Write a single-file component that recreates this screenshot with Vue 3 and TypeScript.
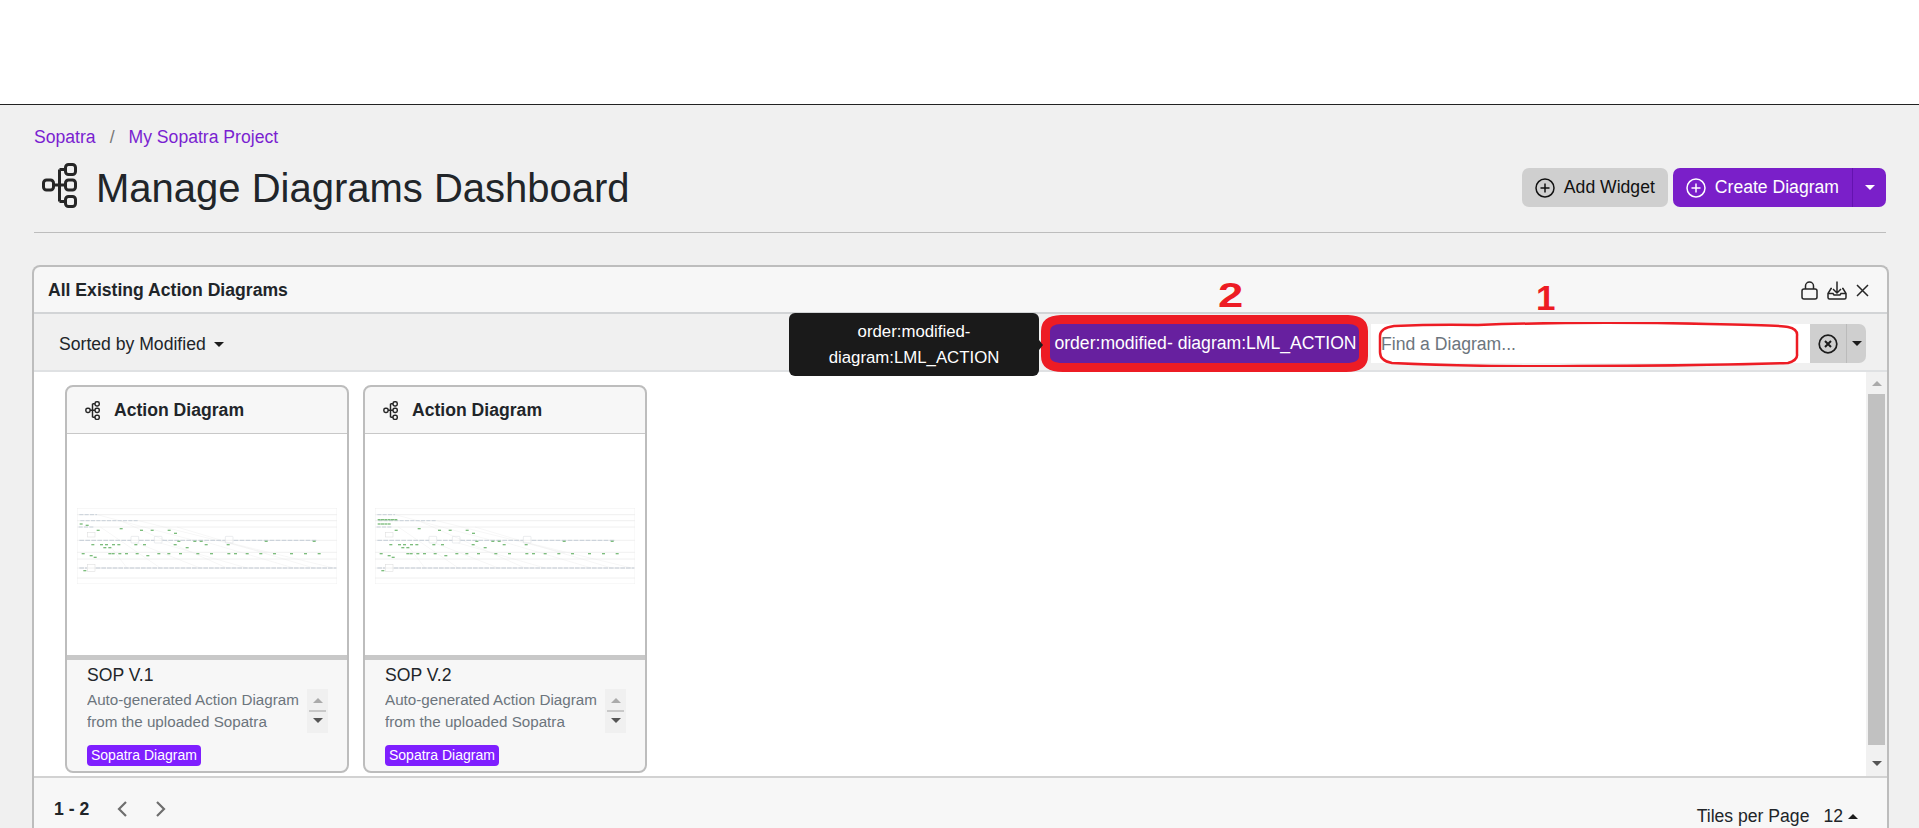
<script setup lang="ts">
const tiles = [
  { name: 'SOP V.1', variant: 1 },
  { name: 'SOP V.2', variant: 2 },
]

// thumbnail drawn in the coordinates of a 780 x 228 box (origin 50,55)
const lanes = [55, 75, 93, 112, 152, 188, 208, 235, 265, 283]
const greens1: [number, number][] = [
  [62, 103], [80, 107], [113, 122], [182, 117], [243, 122], [275, 122], [326, 122], [345, 131],
  [97, 165], [123, 165], [138, 165], [159, 165], [175, 165], [133, 174], [148, 174], [226, 165],
  [252, 165], [344, 165], [380, 174], [355, 155], [403, 155], [422, 155], [437, 165], [503, 165],
  [617, 155], [761, 155], [92, 198], [104, 203], [262, 198], [73, 243],
  [68, 192], [148, 192], [158, 192], [178, 192], [198, 192], [230, 192], [295, 192], [325, 192],
  [360, 192], [412, 192], [453, 192], [505, 192], [525, 192], [560, 192], [601, 192], [642, 192],
  [693, 192], [735, 192], [776, 192],
]
const greens2: [number, number][] = [
  [62, 90], [72, 90], [82, 90], [92, 90], [102, 90], [112, 90], [62, 103], [72, 103], [82, 103], [92, 103],
  ...greens1.slice(2),
]
const boxes = [212, 282, 495]
const faint = [
  'M110 75L400 152', 'M235 93L620 190', 'M180 93L500 235', 'M120 112L300 235', 'M230 160L420 235',
  'M300 160L560 235', 'M510 160L820 235', 'M420 152L700 235', 'M150 170L200 235', 'M350 112L760 235',
]
</script>

<template>
  <div class="page">
    <div class="top-bar"></div>
    <main class="content">
      <nav class="crumbs">
        <a>Sopatra</a>
        <span class="crumb-sep">/</span>
        <a>My Sopatra Project</a>
      </nav>

      <header class="page-head">
        <div class="title-wrap">
          <svg class="title-icon" viewBox="0 0 35 45" fill="none" stroke="#262626" stroke-width="3">
            <rect x="1.500" y="17" width="10" height="10" rx="3" />
            <rect x="23.500" y="1.500" width="10" height="10" rx="3" />
            <rect x="23.500" y="17" width="10" height="10" rx="3" />
            <rect x="23.500" y="33.500" width="10" height="10" rx="3" />
            <path d="M11.500 22h12M17.500 6.500v32M17.500 6.500h6M17.500 38.500h6" />
          </svg>
          <h1>Manage Diagrams Dashboard</h1>
        </div>
        <div class="head-actions">
          <button class="btn btn-grey">
            <svg class="btn-icon" viewBox="0 0 20 20" fill="none" stroke="currentColor" stroke-width="1.500">
              <circle cx="10" cy="10" r="9" />
              <path d="M10 5.500v9M5.500 10h9" />
            </svg>
            Add Widget
          </button>
          <div class="btn-split">
            <button class="btn btn-purple">
              <svg class="btn-icon" viewBox="0 0 20 20" fill="none" stroke="currentColor" stroke-width="1.500">
                <circle cx="10" cy="10" r="9" />
                <path d="M10 5.500v9M5.500 10h9" />
              </svg>
              Create Diagram
            </button>
            <button class="btn-caret"><span class="caret"></span></button>
          </div>
        </div>
      </header>

      <section class="panel">
        <div class="panel-head">
          <span class="panel-title">All Existing Action Diagrams</span>
          <div class="panel-tools">
            <svg class="tool-lock" viewBox="0 0 17 19" fill="none" stroke="#262626" stroke-width="1.500">
              <rect x="1" y="8" width="15" height="10" rx="2" />
              <path d="M4.500 8V5a4 4 0 0 1 8 0v3" />
            </svg>
            <svg class="tool-save" viewBox="0 0 20 19" fill="none" stroke="#262626" stroke-width="1.500">
              <path d="M10 0.500v11M6 8l4 4 4-4" />
              <path d="M5 7.500H4L1 12.500v4a1.500 1.500 0 0 0 1.500 1.500h15a1.500 1.500 0 0 0 1.500-1.500v-4L16 7.500h-1" />
              <path d="M1 12.500h5l1 1.500h6l1-1.500h5" />
            </svg>
            <svg class="tool-close" viewBox="0 0 13 13" fill="none" stroke="#262626" stroke-width="1.500">
              <path d="M1 1l11 11M12 1L1 12" />
            </svg>
          </div>
        </div>

        <div class="toolbar">
          <button class="sort-btn">Sorted by Modified <span class="caret caret-dark"></span></button>
          <div class="filter-group">
            <div class="tooltip">order:modified-<br />diagram:LML_ACTION</div>
            <div class="chip-wrap">
              <span class="chip">order:modified- diagram:LML_ACTION</span>
              <svg class="ink ink-chip" viewBox="0 0 327 57" preserveAspectRatio="none" fill="none" stroke="#ed1c24" stroke-width="9">
                <path d="M20 4.500 H307 Q322.500 5 322.500 16 V41 Q322.500 52.500 305 52.500 H22 Q4.500 52.500 4.500 41 V16 Q4.500 5 20 4.500Z" />
              </svg>
              <span class="ink-num ink-two">2</span>
            </div>
            <div class="search">
              <div class="search-input">
                <span class="placeholder">Find a Diagram...</span>
                <svg class="ink ink-search" viewBox="0 0 421 45" preserveAspectRatio="none" fill="none" stroke="#ed1c24" stroke-width="2.500">
                  <path d="M16 4 Q60 2 100 3 Q210 -1 330 2 Q400 3 410 5 Q420 7 419 14 V32 Q420 38 410 41 Q300 44 200 44 Q100 45 14 41 Q2 39 2 30 V14 Q2 6 16 4Z" />
                </svg>
                <span class="ink-num ink-one">1</span>
              </div>
              <button class="search-clear">
                <svg viewBox="0 0 20 20" fill="none" stroke="#1c1c1c" stroke-width="1.700">
                  <circle cx="10" cy="10" r="8.800" />
                  <path d="M7 7l6 6M13 7l-6 6" stroke-width="2" />
                </svg>
              </button>
              <button class="search-caret"><span class="caret caret-dark"></span></button>
            </div>
          </div>
        </div>

        <div class="panel-body">
          <div class="tiles">
            <article v-for="t in tiles" :key="t.name" class="tile">
              <div class="tile-head">
                <svg class="tile-icon" viewBox="0 0 35 45" fill="none" stroke="#262626" stroke-width="3.500">
                  <rect x="1.800" y="17" width="10" height="10" rx="4" />
                  <rect x="23.500" y="1.800" width="10" height="10" rx="4" />
                  <rect x="23.500" y="17" width="10" height="10" rx="4" />
                  <rect x="23.500" y="33.500" width="10" height="10" rx="4" />
                  <path d="M11.500 22h12M17.500 6.500v32M17.500 6.500h6M17.500 38.500h6" />
                </svg>
                <span>Action Diagram</span>
              </div>
              <div class="tile-preview">
                <svg class="thumb" viewBox="50 55 780 228" fill="none">
                  <path v-for="d in faint" :key="d" :d="d" stroke="#efefef" stroke-width="1.500" />
                  <path v-for="y in lanes" :key="y" :d="`M50 ${y}H830`" stroke="#e8e8e8" stroke-width="2" />
                  <path d="M50 55V283M830 55V283" stroke="#ececec" stroke-width="2" />
                  <path d="M57 75H110M60 93H235M55 112H100" stroke="#c9d1da" stroke-width="3" stroke-dasharray="12 4" />
                  <path d="M57 152H212M236 152H282M306 152H495M520 152H770" stroke="#c5cdd7" stroke-width="3" stroke-dasharray="14 4" />
                  <path d="M57 235H80M106 235H828" stroke="#c0c8d2" stroke-width="3" stroke-dasharray="14 3" />
                  <rect v-for="x in boxes" :key="x" :x="x" y="140" width="23" height="20" rx="2" stroke="#d4d8dc" stroke-width="1.500" />
                  <rect x="82" y="128" width="22" height="14" stroke="#dadada" stroke-width="1.500" />
                  <rect x="82" y="224" width="22" height="22" stroke="#dadada" stroke-width="1.500" />
                  <rect
                    v-for="([x, y], i) in t.variant === 1 ? greens1 : greens2"
                    :key="i"
                    :x="x - 4"
                    :y="y - 2"
                    width="9"
                    height="4"
                    fill="#7dbd7d"
                  />
                </svg>
              </div>
              <div class="tile-foot">
                <div class="tile-name">{{ t.name }}</div>
                <div class="tile-desc">
                  <p>Auto-generated Action Diagram from the uploaded Sopatra</p>
                  <div class="mini-scroll">
                    <span class="arrow-up"></span>
                    <span class="mini-thumb"></span>
                    <span class="arrow-down"></span>
                  </div>
                </div>
                <span class="tag">Sopatra Diagram</span>
              </div>
            </article>
          </div>
          <div class="scrollbar">
            <span class="arrow-up light"></span>
            <div class="scroll-thumb"></div>
            <span class="arrow-down"></span>
          </div>
        </div>

        <footer class="panel-foot">
          <div class="pager">
            <strong>1 - 2</strong>
            <svg viewBox="0 0 12 18" fill="none" stroke="#6e6e6e" stroke-width="2.200"><path d="M10 2L3 9l7 7" /></svg>
            <svg viewBox="0 0 12 18" fill="none" stroke="#6e6e6e" stroke-width="2.200"><path d="M2 2l7 7-7 7" /></svg>
          </div>
          <div class="per-page">
            Tiles per Page <span class="per-count">12</span><span class="caret-up"></span>
          </div>
        </footer>
      </section>
    </main>
  </div>
</template>

<style>
html,
body {
  margin: 0;
  background: #f0f0f0;
}
</style>

<style scoped>
.page {
  height: 828px;
  overflow: hidden;
  font-family: "Liberation Sans", Arial, sans-serif;
  font-size: 17.6px;
  color: #212529;
}

.top-bar {
  height: 104px;
  background: #fff;
  border-bottom: 1px solid #222;
}

.content {
  padding: 22px 33px 0 34px;
}

.crumbs {
  display: flex;
  align-items: center;
  font-size: 17.6px;
  line-height: 20px;
  color: #7a1fd1;
}

.crumb-sep {
  margin: 0 14px;
  color: #777;
}

.page-head {
  display: flex;
  justify-content: space-between;
  align-items: center;
  margin-top: 6px;
  height: 69px;
  border-bottom: 1px solid #bdbdbd;
  padding-bottom: 10px;
}

.title-wrap {
  display: flex;
  align-items: center;
}

.title-icon {
  width: 35px;
  height: 45px;
  margin: -4px 19px 0 8px;
}

h1 {
  margin: 0;
  font-size: 40px;
  line-height: 48px;
  font-weight: 400;
  color: #212529;
}

.head-actions {
  display: flex;
  align-items: center;
  gap: 5px;
}

.btn {
  display: flex;
  align-items: center;
  gap: 9px;
  height: 39px;
  border: none;
  font: inherit;
  padding: 0 13px;
  border-radius: 7px;
}

.btn-icon {
  width: 20px;
  height: 20px;
}

.btn-grey {
  background: #cfcfcf;
  color: #111;
}

.btn-split {
  display: flex;
  background: #7a1fc9;
  border-radius: 7px;
}

.btn-purple {
  background: transparent;
  color: #fff;
  border-right: 1px solid #6413b0;
  border-radius: 7px 0 0 7px;
}

.btn-caret {
  width: 33px;
  height: 39px;
  padding: 0;
  border: none;
  background: transparent;
  display: flex;
  align-items: center;
  justify-content: center;
}

.caret {
  width: 0;
  height: 0;
  border-left: 5px solid transparent;
  border-right: 5px solid transparent;
  border-top: 5px solid #fff;
  display: inline-block;
}

.caret-dark {
  border-top-color: #1c1c1c;
}

.panel {
  margin-top: 32px;
  margin-left: -2px;
  margin-right: -3px;
  border: 2px solid #bdbdbd;
  border-bottom: none;
  border-radius: 8px 8px 0 0;
  background: #f7f7f7;
  display: flex;
  flex-direction: column;
  height: 563px;
  box-sizing: border-box;
}

.panel-head {
  height: 43px;
  display: flex;
  justify-content: space-between;
  align-items: center;
  padding: 2px 18px 0 14px;
  border-bottom: 2px solid #d2d4d6;
  flex-shrink: 0;
}

.panel-title {
  font-weight: 700;
  color: #212529;
}

.panel-tools {
  display: flex;
  align-items: center;
  gap: 9px;
}

.tool-lock {
  width: 17px;
  height: 19px;
}

.tool-save {
  width: 20px;
  height: 19px;
}

.tool-close {
  width: 13px;
  height: 13px;
}

.toolbar {
  height: 56px;
  background: #f0f0f0;
  border-bottom: 2px solid #dfe1e3;
  display: flex;
  align-items: center;
  justify-content: space-between;
  padding: 0 21px 0 25px;
  flex-shrink: 0;
}

.sort-btn {
  border: none;
  background: none;
  padding: 0;
  margin-top: 4px;
  font: inherit;
  color: #212529;
  display: flex;
  align-items: center;
  gap: 8px;
}

.filter-group {
  display: flex;
  align-items: center;
  height: 100%;
}

.tooltip {
  width: 250px;
  height: 63px;
  margin-top: -1px;
  background: #1a1a1a;
  color: #fff;
  border-radius: 6px;
  text-align: center;
  font-size: 16.8px;
  line-height: 26px;
  display: flex;
  align-items: center;
  justify-content: center;
  position: relative;
  z-index: 2;
  align-self: flex-start;
}

.tooltip::after {
  content: "";
  position: absolute;
  right: -4px;
  top: 27px;
  border-top: 5px solid transparent;
  border-bottom: 5px solid transparent;
  border-left: 4px solid #1a1a1a;
}

.chip-wrap {
  position: relative;
  margin-left: 11px;
  margin-top: 2px;
  display: flex;
}

.chip {
  width: 311px;
  height: 40px;
  background: #67209f;
  color: #fff;
  line-height: 41px;
  text-align: center;
  white-space: nowrap;
}

.ink {
  position: absolute;
  pointer-events: none;
}

.ink-chip {
  left: -9px;
  top: -8px;
  width: 327px;
  height: 57px;
}

.ink-num {
  position: absolute;
  color: #ed1c24;
  font-weight: 700;
  font-size: 35px;
  line-height: 35px;
}

.ink-two {
  left: 168px;
  top: -46px;
  transform: scaleX(1.300);
  transform-origin: left;
}

.ink-one {
  left: 165px;
  top: -44px;
}

.search {
  display: flex;
  margin-left: 10px;
  margin-top: 3px;
  height: 39px;
}

.search-input {
  position: relative;
  width: 439px;
  background: #fff;
  display: flex;
  align-items: center;
  padding-left: 10px;
  box-sizing: border-box;
}

.placeholder {
  color: #6c757d;
  padding-top: 1px;
}

.ink-search {
  left: 7px;
  top: -2px;
  width: 421px;
  height: 45px;
}

.search-clear {
  width: 37px;
  border: none;
  border-right: 1px solid #bbb;
  background: #cfcfcf;
  padding: 0;
  display: flex;
  align-items: center;
  justify-content: center;
}

.search-clear svg {
  width: 20px;
  height: 20px;
}

.search-caret {
  width: 19px;
  border: none;
  padding: 0;
  background: #cfcfcf;
  border-radius: 0 7px 7px 0;
  display: flex;
  align-items: center;
  justify-content: center;
}

.panel-body {
  flex: 1;
  min-height: 0;
  background: #fff;
  display: flex;
  justify-content: space-between;
}

.tiles {
  display: flex;
  gap: 14px;
  padding: 13px 0 0 31px;
}

.tile {
  width: 284px;
  height: 388px;
  border: 2px solid #bdbdbd;
  border-radius: 8px;
  background: #f7f7f7;
  display: flex;
  flex-direction: column;
  box-sizing: border-box;
  overflow: hidden;
}

.tile-head {
  height: 46px;
  display: flex;
  align-items: center;
  gap: 14px;
  padding-left: 18px;
  font-weight: 700;
  color: #212529;
  border-bottom: 1px solid #c8c8c8;
  flex-shrink: 0;
}

.tile-icon {
  width: 15px;
  height: 19px;
}

.tile-preview {
  height: 221px;
  background: #fff;
  border-bottom: 5px solid #c8c8c8;
  flex-shrink: 0;
  position: relative;
}

.thumb {
  position: absolute;
  left: 10px;
  top: 74px;
  width: 260px;
  height: 76px;
}

.tile-foot {
  padding: 4px 19px 0 20px;
  flex: 1;
  min-height: 0;
}

.tile-name {
  line-height: 22px;
  color: #212529;
}

.tile-desc {
  display: flex;
  justify-content: space-between;
  margin-top: 3px;
}

.tile-desc p {
  margin: 0;
  width: 217px;
  font-size: 15.2px;
  line-height: 22px;
  color: #6c757d;
  height: 44px;
  overflow: hidden;
}

.mini-scroll {
  width: 21px;
  height: 44px;
  background: #f0f0f0;
  display: flex;
  flex-direction: column;
  align-items: center;
  justify-content: space-between;
  padding: 9px 0 10px;
  box-sizing: border-box;
}

.mini-thumb {
  width: 17px;
  height: 2px;
  background: #c8c8c8;
}

.arrow-up,
.arrow-down {
  width: 0;
  height: 0;
  border-left: 5px solid transparent;
  border-right: 5px solid transparent;
}

.arrow-up {
  border-bottom: 5px solid #aaa;
}

.arrow-down {
  border-top: 5px solid #555;
}

.tag {
  display: block;
  width: fit-content;
  margin-top: 12px;
  height: 21px;
  line-height: 21px;
  padding: 0 4px;
  background: #7f1fff;
  color: #fff;
  font-size: 14px;
  border-radius: 4px;
}

.scrollbar {
  width: 21px;
  background: #f1f1f1;
  display: flex;
  flex-direction: column;
  align-items: center;
  padding: 9px 0 10px;
  box-sizing: border-box;
}

.scroll-thumb {
  width: 17px;
  height: 351px;
  background: #c1c1c1;
  margin-top: 8px;
  margin-bottom: auto;
}

.panel-foot {
  height: 50px;
  border-top: 2px solid #d2d2d2;
  background: #f7f7f7;
  display: flex;
  justify-content: space-between;
  padding: 0 29px 0 20px;
  flex-shrink: 0;
}

.pager {
  display: flex;
  align-items: center;
  gap: 27px;
  height: 30px;
  margin-top: 16px;
}

.pager svg {
  width: 12px;
  height: 18px;
}

.per-page {
  margin-top: 27px;
  color: #212529;
  display: flex;
  align-items: center;
  height: 22px;
}

.per-count {
  margin-left: 14px;
  margin-right: 5px;
}

.caret-up {
  width: 0;
  height: 0;
  border-left: 5px solid transparent;
  border-right: 5px solid transparent;
  border-bottom: 5px solid #1c1c1c;
}
</style>
